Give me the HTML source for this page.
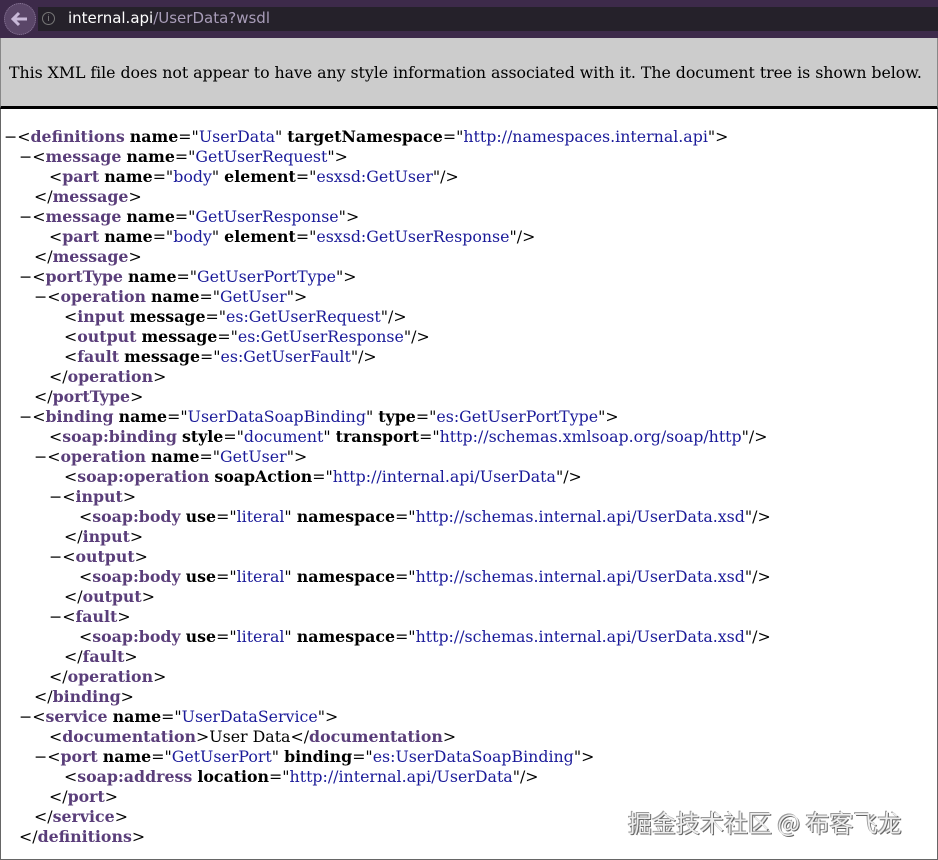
<!DOCTYPE html>
<html><head><meta charset="utf-8"><style>
html,body{margin:0;padding:0;width:938px;height:860px;overflow:hidden;background:#fff}
.top{position:absolute;left:0;top:0;width:938px;height:38px;background:#3d2a4a;}
.url{position:absolute;left:38px;top:7px;width:900px;height:24px;background:#25212a;}
.back{position:absolute;left:4px;top:3px;width:32px;height:32px;border-radius:50%;background:#5a4668;border:1px dotted #8a7898;box-sizing:border-box;z-index:2}
.urltext{position:absolute;left:68px;top:9px;font:15px "DejaVu Sans","Liberation Sans",sans-serif;color:#fff}
.urltext span{color:#a89cb8}
.info{position:absolute;left:42px;top:12px;width:11px;height:11px;border:1px solid #777;border-radius:50%;color:#888;font:9px sans-serif;text-align:center;line-height:11px}
.banner{position:absolute;left:0;top:38px;width:936px;height:68px;background:#cccccc;border-left:1px solid #888;border-right:1px solid #888;border-bottom:3px solid #000;font:15.8px "DejaVu Serif",serif;color:#000}
.banner div{position:absolute;left:8px;top:25px;white-space:nowrap;letter-spacing:-0.05px}
.frame{position:absolute;left:0;top:109px;width:936px;height:750px;border-left:1px solid #666;border-right:1px solid #666;border-bottom:1px solid #666}
.c{position:absolute;left:0;top:127px;font:15.8px "DejaVu Serif",serif;line-height:20px;color:#000}
.l{height:20px;white-space:pre}
.t{color:#5a3e7a;font-weight:bold}
.a{font-weight:bold}
.v{color:#1a1a99}
.wm{position:absolute;left:628px;top:804px;font:24px "Noto Sans CJK SC",sans-serif;color:#eee;text-shadow:1px 1px 0 #666,-1px -1px 0 #999}
</style></head><body>
<div class="top"><div class="back"><svg width="30" height="30" viewBox="0 0 30 30"><path d="M22 15H9M14 9l-6 6 6 6" stroke="#c8b8d8" stroke-width="3" fill="none"/></svg></div><div class="url"></div><div class="info">i</div><div class="urltext">internal.api<span>/UserData?wsdl</span></div></div>
<div class="banner"><div>This XML file does not appear to have any style information associated with it. The document tree is shown below.</div></div>
<div class="frame"></div>
<div class="c"><div class="l" style="padding-left:4px">−&lt;<span class="t">definitions</span> <span class="a">name</span>="<span class="v">UserData</span>" <span class="a">targetNamespace</span>="<span class="v">http://namespaces.internal.api</span>"&gt;</div><div class="l" style="padding-left:19px">−&lt;<span class="t">message</span> <span class="a">name</span>="<span class="v">GetUserRequest</span>"&gt;</div><div class="l" style="padding-left:49px">&lt;<span class="t">part</span> <span class="a">name</span>="<span class="v">body</span>" <span class="a">element</span>="<span class="v">esxsd:GetUser</span>"/&gt;</div><div class="l" style="padding-left:34px">&lt;/<span class="t">message</span>&gt;</div><div class="l" style="padding-left:19px">−&lt;<span class="t">message</span> <span class="a">name</span>="<span class="v">GetUserResponse</span>"&gt;</div><div class="l" style="padding-left:49px">&lt;<span class="t">part</span> <span class="a">name</span>="<span class="v">body</span>" <span class="a">element</span>="<span class="v">esxsd:GetUserResponse</span>"/&gt;</div><div class="l" style="padding-left:34px">&lt;/<span class="t">message</span>&gt;</div><div class="l" style="padding-left:19px">−&lt;<span class="t">portType</span> <span class="a">name</span>="<span class="v">GetUserPortType</span>"&gt;</div><div class="l" style="padding-left:34px">−&lt;<span class="t">operation</span> <span class="a">name</span>="<span class="v">GetUser</span>"&gt;</div><div class="l" style="padding-left:64px">&lt;<span class="t">input</span> <span class="a">message</span>="<span class="v">es:GetUserRequest</span>"/&gt;</div><div class="l" style="padding-left:64px">&lt;<span class="t">output</span> <span class="a">message</span>="<span class="v">es:GetUserResponse</span>"/&gt;</div><div class="l" style="padding-left:64px">&lt;<span class="t">fault</span> <span class="a">message</span>="<span class="v">es:GetUserFault</span>"/&gt;</div><div class="l" style="padding-left:49px">&lt;/<span class="t">operation</span>&gt;</div><div class="l" style="padding-left:34px">&lt;/<span class="t">portType</span>&gt;</div><div class="l" style="padding-left:19px">−&lt;<span class="t">binding</span> <span class="a">name</span>="<span class="v">UserDataSoapBinding</span>" <span class="a">type</span>="<span class="v">es:GetUserPortType</span>"&gt;</div><div class="l" style="padding-left:49px">&lt;<span class="t">soap:binding</span> <span class="a">style</span>="<span class="v">document</span>" <span class="a">transport</span>="<span class="v">http://schemas.xmlsoap.org/soap/http</span>"/&gt;</div><div class="l" style="padding-left:34px">−&lt;<span class="t">operation</span> <span class="a">name</span>="<span class="v">GetUser</span>"&gt;</div><div class="l" style="padding-left:64px">&lt;<span class="t">soap:operation</span> <span class="a">soapAction</span>="<span class="v">http://internal.api/UserData</span>"/&gt;</div><div class="l" style="padding-left:49px">−&lt;<span class="t">input</span>&gt;</div><div class="l" style="padding-left:79px">&lt;<span class="t">soap:body</span> <span class="a">use</span>="<span class="v">literal</span>" <span class="a">namespace</span>="<span class="v">http://schemas.internal.api/UserData.xsd</span>"/&gt;</div><div class="l" style="padding-left:64px">&lt;/<span class="t">input</span>&gt;</div><div class="l" style="padding-left:49px">−&lt;<span class="t">output</span>&gt;</div><div class="l" style="padding-left:79px">&lt;<span class="t">soap:body</span> <span class="a">use</span>="<span class="v">literal</span>" <span class="a">namespace</span>="<span class="v">http://schemas.internal.api/UserData.xsd</span>"/&gt;</div><div class="l" style="padding-left:64px">&lt;/<span class="t">output</span>&gt;</div><div class="l" style="padding-left:49px">−&lt;<span class="t">fault</span>&gt;</div><div class="l" style="padding-left:79px">&lt;<span class="t">soap:body</span> <span class="a">use</span>="<span class="v">literal</span>" <span class="a">namespace</span>="<span class="v">http://schemas.internal.api/UserData.xsd</span>"/&gt;</div><div class="l" style="padding-left:64px">&lt;/<span class="t">fault</span>&gt;</div><div class="l" style="padding-left:49px">&lt;/<span class="t">operation</span>&gt;</div><div class="l" style="padding-left:34px">&lt;/<span class="t">binding</span>&gt;</div><div class="l" style="padding-left:19px">−&lt;<span class="t">service</span> <span class="a">name</span>="<span class="v">UserDataService</span>"&gt;</div><div class="l" style="padding-left:49px">&lt;<span class="t">documentation</span>&gt;User Data&lt;/<span class="t">documentation</span>&gt;</div><div class="l" style="padding-left:34px">−&lt;<span class="t">port</span> <span class="a">name</span>="<span class="v">GetUserPort</span>" <span class="a">binding</span>="<span class="v">es:UserDataSoapBinding</span>"&gt;</div><div class="l" style="padding-left:64px">&lt;<span class="t">soap:address</span> <span class="a">location</span>="<span class="v">http://internal.api/UserData</span>"/&gt;</div><div class="l" style="padding-left:49px">&lt;/<span class="t">port</span>&gt;</div><div class="l" style="padding-left:34px">&lt;/<span class="t">service</span>&gt;</div><div class="l" style="padding-left:19px">&lt;/<span class="t">definitions</span>&gt;</div></div>
<div class="wm">掘金技术社区 @ 布客飞龙</div>
</body></html>
